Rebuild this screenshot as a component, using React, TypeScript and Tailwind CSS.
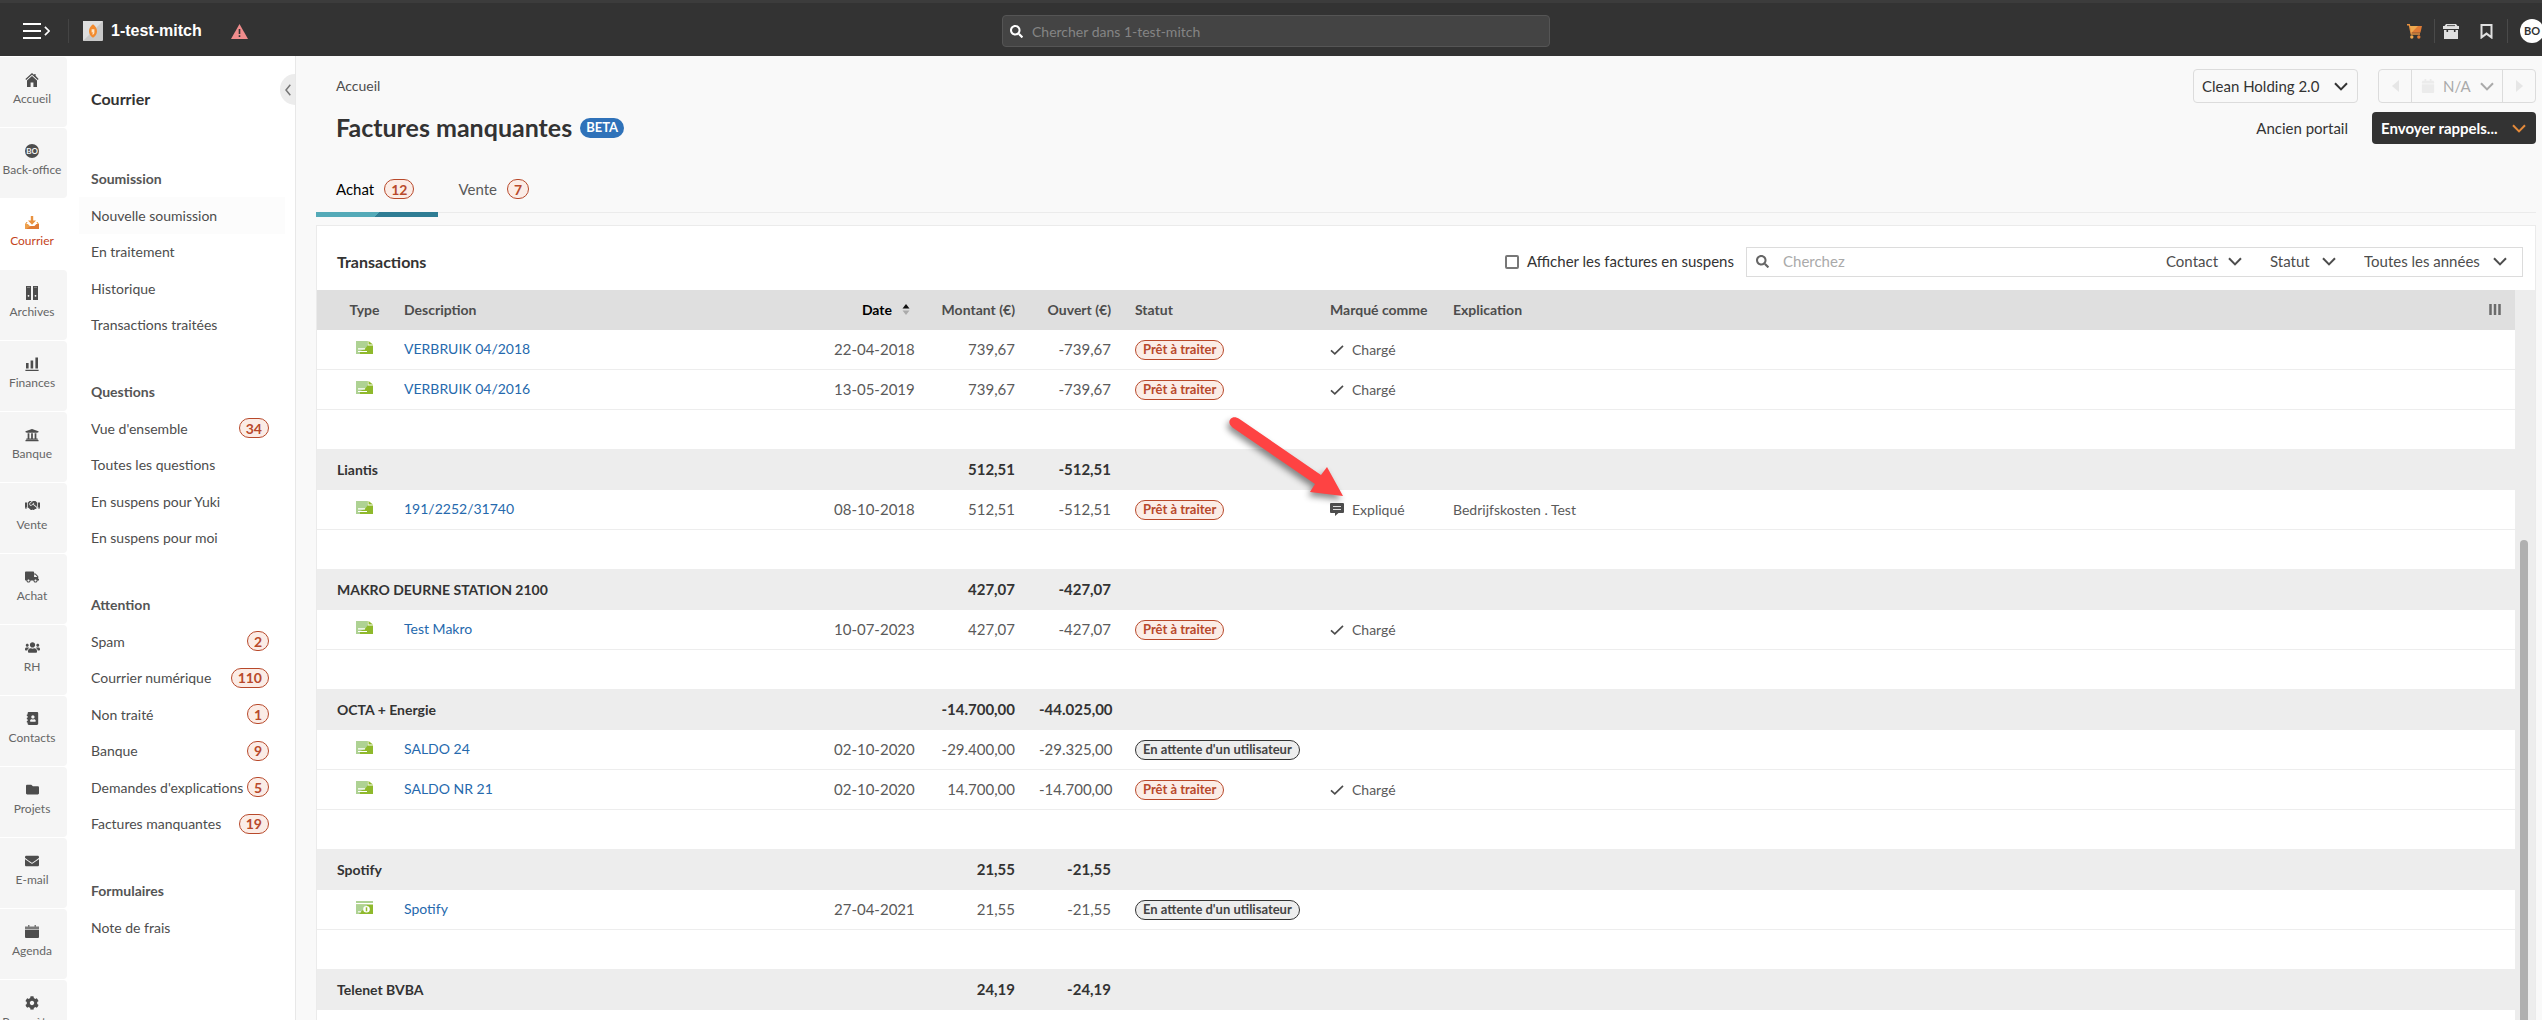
import { useState } from "react";
import type { ReactNode } from "react";
import { clsx } from "clsx";
import { FaAddressBook, FaCalendar, FaCog, FaEnvelope, FaFolder, FaHandshake, FaSearch, FaTruck, FaUniversity, FaUsers } from "react-icons/fa";

interface ChevronProps {
    className?: string;
}

const Chevron = ({ className }: ChevronProps) => (
    <svg viewBox="0 0 14 9" fill="none" stroke="currentColor" strokeWidth="2" className={clsx("h-[9px] w-[14px]", className)}>
        <path d="M1 1.2 7 7.4 13 1.2" />
    </svg>
);

const HomeIcon = () => (
    <svg viewBox="0 0 14 14" fill="currentColor" className="size-[14px]">
        <path d="M10.6 1v1.7L13.6 6l-.8.9L7 1.7 1.2 6.9.4 6 7 0l2.2 2V1z" />
        <path d="M7 3 2 7.5V14h3.6V9.4h2.8V14H12V7.5z" />
    </svg>
);

const BackOfficeIcon = () => (
    <span className="flex size-[14px] items-center justify-center rounded-full bg-[#4d4d4d] text-[8px] font-bold text-[#f5f5f5]">BO</span>
);

const InboxIcon = () => (
    <svg viewBox="0 0 14 14" className="size-[14px]">
        <path d="M0 9h2.600L4.600 11h4.800L11.400 9H14v5H0z" fill="#e07b35" />
        <path d="M0 9h2.600L4.600 11H6L1 14H0z" fill="#eda04c" />
        <path d="M5.800 1h2.400v4.600H11L7 9.800 3 5.600h2.800z" fill="#e9923f" />
        <path d="M1.400 7h1.200L1.400 9H0zM12.600 7h-1.200l1.200 2H14z" fill="#eda04c" />
    </svg>
);

const ArchiveIcon = () => (
    <svg viewBox="0 0 14 14" className="size-[14px]">
        <path d="M1 0h5v14H1zM8 0h5v14H8z" fill="#4d4d4d" />
        <path d="M2 1.4h3M9 1.4h3" stroke="#8a8a8a" />
        <circle cx="3.5" cy="9.8" r=".9" fill="#fff" />
        <circle cx="10.5" cy="9.8" r=".9" fill="#fff" />
    </svg>
);

const BarsIcon = () => (
    <svg viewBox="0 0 14 14" fill="currentColor" className="size-[14px]">
        <path d="M1 6h2.6v5.6H1zM5.6 3.6h2.6v8H5.6zM10.4.6H13v11h-2.6zM.4 12.8h13.2V14H.4z" />
    </svg>
);

const AgendaIcon = () => (
    <svg viewBox="0 0 14 13" className="h-[13px] w-[14px]">
        <path d="M0 1.500h3V0h1.500v1.500h5V0H11v1.500h3v3H0z" fill="#7a7a7a" />
        <path d="M0 5h14v7a1 1 0 0 1-1 1H1a1 1 0 0 1-1-1z" fill="#4d4d4d" />
    </svg>
);

const rail: { label: string; icon: ReactNode; active?: boolean }[] = [
    { label: "Accueil", icon: <HomeIcon /> },
    { label: "Back-office", icon: <BackOfficeIcon /> },
    { label: "Courrier", icon: <InboxIcon />, active: true },
    { label: "Archives", icon: <ArchiveIcon /> },
    { label: "Finances", icon: <BarsIcon /> },
    { label: "Banque", icon: <FaUniversity size={14} /> },
    { label: "Vente", icon: <FaHandshake size={15} /> },
    { label: "Achat", icon: <FaTruck size={14} /> },
    { label: "RH", icon: <FaUsers size={15} /> },
    { label: "Contacts", icon: <FaAddressBook size={13} className="-scale-x-100" /> },
    { label: "Projets", icon: <FaFolder size={13} /> },
    { label: "E-mail", icon: <FaEnvelope size={14} /> },
    { label: "Agenda", icon: <AgendaIcon /> },
    { label: "Paramètres", icon: <FaCog size={14} /> },
];

interface MenuGroup {
    title: string;
    listHeight: string;
    items: { label: string; count?: number; hover?: boolean }[];
}

const menu: MenuGroup[] = [
    {
        title: "Soumission",
        listHeight: "h-[146px]",
        items: [
            { label: "Nouvelle soumission", hover: true },
            { label: "En traitement" },
            { label: "Historique" },
            { label: "Transactions traitées" },
        ],
    },
    {
        title: "Questions",
        listHeight: "h-[146px]",
        items: [
            { label: "Vue d'ensemble", count: 34 },
            { label: "Toutes les questions" },
            { label: "En suspens pour Yuki" },
            { label: "En suspens pour moi" },
        ],
    },
    {
        title: "Attention",
        listHeight: "h-[219px]",
        items: [
            { label: "Spam", count: 2 },
            { label: "Courrier numérique", count: 110 },
            { label: "Non traité", count: 1 },
            { label: "Banque", count: 9 },
            { label: "Demandes d'explications", count: 5 },
            { label: "Factures manquantes", count: 19 },
        ],
    },
    {
        title: "Formulaires",
        listHeight: "h-9",
        items: [{ label: "Note de frais" }],
    },
];

interface Transaction {
    type: "invoice" | "receipt";
    description: string;
    date: string;
    amount: string;
    open: string;
    status: "ready" | "waiting";
    marked?: "Chargé" | "Expliqué";
    explanation?: string;
}

interface Supplier {
    name?: string;
    amount?: string;
    open?: string;
    rows: Transaction[];
}

const suppliers: Supplier[] = [
    {
        rows: [
            { type: "invoice", description: "VERBRUIK 04/2018", date: "22-04-2018", amount: "739,67", open: "-739,67", status: "ready", marked: "Chargé" },
            { type: "invoice", description: "VERBRUIK 04/2016", date: "13-05-2019", amount: "739,67", open: "-739,67", status: "ready", marked: "Chargé" },
        ],
    },
    {
        name: "Liantis",
        amount: "512,51",
        open: "-512,51",
        rows: [
            { type: "invoice", description: "191/2252/31740", date: "08-10-2018", amount: "512,51", open: "-512,51", status: "ready", marked: "Expliqué", explanation: "Bedrijfskosten . Test" },
        ],
    },
    {
        name: "MAKRO DEURNE STATION 2100",
        amount: "427,07",
        open: "-427,07",
        rows: [
            { type: "invoice", description: "Test Makro", date: "10-07-2023", amount: "427,07", open: "-427,07", status: "ready", marked: "Chargé" },
        ],
    },
    {
        name: "OCTA + Energie",
        amount: "-14.700,00",
        open: "-44.025,00",
        rows: [
            { type: "invoice", description: "SALDO 24", date: "02-10-2020", amount: "-29.400,00", open: "-29.325,00", status: "waiting" },
            { type: "invoice", description: "SALDO NR 21", date: "02-10-2020", amount: "14.700,00", open: "-14.700,00", status: "ready", marked: "Chargé" },
        ],
    },
    {
        name: "Spotify",
        amount: "21,55",
        open: "-21,55",
        rows: [
            { type: "receipt", description: "Spotify", date: "27-04-2021", amount: "21,55", open: "-21,55", status: "waiting" },
        ],
    },
    { name: "Telenet BVBA", amount: "24,19", open: "-24,19", rows: [] },
];

export default function App() {
    return (
        <div className="flex h-screen flex-col overflow-hidden bg-[#f9f9f9] font-['Lato',sans-serif] text-[14px] text-[#4d4d4d]">
            <TopBar />
            <div className="flex min-h-0 flex-1">
                <Rail />
                <SideMenu />
                <main className="flex min-w-0 flex-1 flex-col pr-[6px] pl-5">
                    <PageHeader />
                    <Transactions />
                </main>
            </div>
        </div>
    );
}

const TopBar = () => (
    <header className="flex h-14 shrink-0 items-center border-t-[3px] border-[#3c3c3c] bg-[#333] pt-[3px]">
        <div className="flex-1">
            <div className="flex items-center pl-[23px]">
                <button aria-label="Menu" className="flex items-center gap-[3px] text-white">
                    <svg viewBox="0 0 18 16" stroke="currentColor" strokeWidth="2" className="h-4 w-[18px]">
                        <path d="M0 1h18M0 8h18M0 15h18" />
                    </svg>
                    <svg viewBox="0 0 7 12" fill="none" stroke="currentColor" strokeWidth="2" className="h-[10px] w-[6px]">
                        <path d="m1 1 5 5-5 5" />
                    </svg>
                </button>
                <span className="ml-[18px] h-6 w-px bg-[#444]" />
                <a href="#" className="ml-[14px] flex items-center gap-2 font-['Liberation_Sans',sans-serif] text-[16px] font-bold text-white">
                    <svg viewBox="0 0 20 20" className="size-5">
                        <rect width="20" height="20" rx="1" fill="#c9c9c9" />
                        <path d="M0 0h20L0 20z" fill="#dedede" />
                        <path d="M10 3.2c2.6 2 4 4.300 4 7s-1.600 5-4 6.600c-2.400-1.600-4-3.900-4-6.600s1.400-5 4-7z" fill="#f28a2e" />
                        <path d="M8.600 8.200h2.800v3.300c0 1.200-.8 2-2 2.200v-1.300c.6-.2.8-.5.8-1H8.600z" fill="#fde6c8" />
                    </svg>
                    1-test-mitch
                </a>
                <svg viewBox="0 0 17 15" className="ml-[29px] h-[15px] w-[17px]">
                    <path d="M8.500 0 17 15H0z" fill="#f08c8c" />
                    <path d="M8.500 5v5M8.500 11.300v1.800" stroke="#333" strokeWidth="1.600" />
                </svg>
            </div>
        </div>

        {/* global search */}
        <div className="ml-2 flex h-8 w-[548px] items-center gap-[9px] rounded-sm border border-[#555] bg-[#444] px-[7px]">
            <FaSearch size={13} className="text-white" />
            <input aria-label="Chercher" placeholder="Chercher dans 1-test-mitch" className="min-w-0 flex-1 bg-transparent text-[14px] outline-none placeholder:text-[#858585]" />
        </div>

        <div className="-mr-[2px] flex flex-1 items-center justify-end">
            <button aria-label="Boutique">
                <svg viewBox="0 0 15 15" className="size-[15px]">
                    <path d="M0 .7h2.300L4.300 10H13" fill="none" stroke="#e8923f" strokeWidth="1.400" />
                    <path d="M2.800 2H15l-1.600 6.800H4.200z" fill="#e07b35" />
                    <path d="M2.800 2H11L4.500 8.800h-.3z" fill="#efa94f" />
                    <circle cx="4.800" cy="13" r="1.700" fill="#efa94f" />
                    <circle cx="11.800" cy="13" r="1.700" fill="#e07b35" />
                </svg>
            </button>
            <span className="mr-2 ml-3 h-6 w-px bg-[#4a4a4a]" />
            <button aria-label="Panier" className="text-[#e0e0e0]">
                <svg viewBox="0 0 16 15" fill="currentColor" className="h-[15px] w-4">
                    <path d="M3 0h10l1.500 2H16v3H0V2h1.500z" />
                    <path d="M1 6h2.500v2h1.600V6h5.800v2h1.600V6H15v9H1z" />
                    <path d="M4 1.600h8" stroke="#333" strokeWidth=".8" />
                </svg>
            </button>
            <button aria-label="Signets" className="ml-[21px] text-[#e0e0e0]">
                <svg viewBox="0 0 13 15" fill="none" stroke="currentColor" strokeWidth="2" className="h-[15px] w-[13px]">
                    <path d="M1.500 1h10v12.400L6.500 9.600l-5 3.800z" />
                </svg>
            </button>
            <span className="mr-3 ml-[14px] h-6 w-px bg-[#4a4a4a]" />
            <button className="flex size-6 items-center justify-center rounded-full bg-white text-[11px] font-bold text-[#333]">BO</button>
        </div>
    </header>
);

const Rail = () => (
    <nav className="flex w-[67px] shrink-0 flex-col gap-px overflow-hidden bg-white pt-px">
        {rail.map(({ label, icon, active }) => (
            <a
                key={label}
                href="#"
                className={clsx(
                    "flex h-[70px] shrink-0 flex-col items-center gap-1 rounded-r-sm pt-[15px] pr-[3px] text-[12px] leading-4",
                    active ? "bg-white text-[#c4441c]" : "bg-[#f5f5f5] text-[#666]"
                )}
            >
                <span className={clsx("flex h-[15px] items-center", !active && "text-[#4d4d4d]")}>{icon}</span>
                {label}
            </a>
        ))}
    </nav>
);

interface CountProps {
    value: number;
}

const Count = ({ value }: CountProps) => (
    <span className="flex h-5 shrink-0 items-center rounded-[10px] border border-[#b8492b] bg-[#fbece6] px-[6px] text-[14px] font-bold text-[#b8492b]">{value}</span>
);

const SideMenu = () => (
    <aside className="relative w-[229px] shrink-0 border-r border-[#e8e8e8] bg-white pt-[31px] pr-[10px] pl-3">
        <h2 className="pl-3 text-[16px] leading-6 font-bold text-[#333]">Courrier</h2>
        <button aria-label="Réduire" className="absolute top-[18px] right-0 flex h-[31px] w-[15px] items-center justify-center rounded-l-full bg-[#ececec] text-[#777]">
            <svg viewBox="0 0 6 12" fill="none" stroke="currentColor" strokeWidth="1.500" className="h-3 w-[6px]">
                <path d="M5.300.7 1 6l4.300 5.300" />
            </svg>
        </button>
        <div className="mt-[50px] flex flex-col gap-[31px]">
            {menu.map(({ title, listHeight, items }) => (
                <section key={title}>
                    <h3 className="h-9 pl-3 leading-9 font-bold text-[#555]">{title}</h3>
                    <ul className={clsx("grid auto-rows-fr", listHeight)}>
                        {items.map(({ label, count, hover }) => (
                            <li key={label} className={clsx("flex", hover && "bg-[#fcfcfc]")}>
                                <a href="#" className="flex flex-1 items-center justify-between pr-4 pl-3 whitespace-nowrap">
                                    {label}
                                    {count && <Count value={count} />}
                                </a>
                            </li>
                        ))}
                    </ul>
                </section>
            ))}
        </div>
    </aside>
);

const PageHeader = () => {
    const [tab, setTab] = useState("Achat");

    return (
        <div className="shrink-0">
            <div className="mt-[13px] flex h-[34px] items-center justify-between pl-5">
                <a href="#" className="pb-[2px] text-[#4d4d4d]">Accueil</a>
                <div className="flex gap-5 text-[15px]">
                    <div className="relative flex h-[34px] items-center rounded-sm border border-[#dcdcdc]">
                        <select aria-label="Administration" className="h-full w-[163px] appearance-none pl-2 text-[#333]">
                            <option>Clean Holding 2.0</option>
                        </select>
                        <Chevron className="pointer-events-none absolute right-[9px] text-[#333]" />
                    </div>
                    <div className="flex h-[34px] w-[158px] items-center rounded-sm border border-[#dcdcdc]">
                        <button disabled aria-label="Précédent" className="flex h-full w-8 items-center justify-center">
                            <svg viewBox="0 0 7 12" fill="#e6e6e6" className="h-3 w-[7px]"><path d="M7 0v12L0 6z" /></svg>
                        </button>
                        <div className="relative flex h-full flex-1 items-center border-x border-[#dcdcdc] text-[#aaa]">
                            <FaCalendar size={14} className="absolute left-[9px] text-[#ebebeb]" />
                            <select disabled aria-label="Période" className="h-full w-full appearance-none pl-[31px]">
                                <option>N/A</option>
                            </select>
                            <Chevron className="pointer-events-none absolute right-2" />
                        </div>
                        <button disabled aria-label="Suivant" className="flex h-full w-8 items-center justify-center">
                            <svg viewBox="0 0 7 12" fill="#e6e6e6" className="h-3 w-[7px]"><path d="M0 0v12l7-6z" /></svg>
                        </button>
                    </div>
                </div>
            </div>

            <div className="mt-[9px] flex h-8 items-center justify-between pl-5">
                <div className="flex items-center gap-2">
                    <h1 className="pb-[2px] text-[25px] leading-[30px] font-bold text-[#333]">Factures manquantes</h1>
                    <span className="flex h-5 items-center rounded-full bg-[#2f72b9] px-[6px] text-[13px] font-bold text-white">BETA</span>
                </div>
                <div className="flex items-center gap-6 text-[15px]">
                    <a href="#" className="text-[#333]">Ancien portail</a>
                    <button className="flex h-8 w-[164px] items-center justify-between rounded-sm bg-[#333] pr-[10px] pl-[9px] font-bold text-white">
                        Envoyer rappels...
                        <Chevron className="text-[#e58a3a]" />
                    </button>
                </div>
            </div>

            {/* tabs */}
            <div className="mt-6 h-[45px] border-b border-[#ebebeb]">
                <div role="tablist" className="flex">
                    {[["Achat", 12], ["Vente", 7]].map(([label, count]) => (
                        <button
                            key={label}
                            role="tab"
                            aria-selected={tab === label}
                            onClick={() => setTab(label as string)}
                            className={clsx("relative flex h-11 items-center gap-[10px] pr-6 pb-[2px] pl-5 text-[15px]", tab === label ? "text-black" : "text-[#5a5a5a]")}
                        >
                            {label}
                            <Count value={count as number} />
                            {tab === label && (
                                <span className="absolute top-11 left-0 h-[5px] w-full bg-[linear-gradient(140deg,#54aab8_50%,#2f7d94_50%)]" />
                            )}
                        </button>
                    ))}
                </div>
            </div>
        </div>
    );
};

interface FilterProps {
    label: string;
    width: string;
}

const Filter = ({ label, width }: FilterProps) => (
    <div className={clsx("relative flex items-center", width)}>
        <select aria-label={label} className="h-full w-full appearance-none">
            <option>{label}</option>
        </select>
        <Chevron className="pointer-events-none absolute right-0" />
    </div>
);

const Transactions = () => (
    <section className="mt-3 flex min-h-0 flex-1 flex-col border border-b-0 border-[#ebebeb] bg-white">
        <div className="flex h-16 shrink-0 items-center justify-between pt-[7px] pr-3 pl-5">
            <h2 className="text-[16px] font-bold text-[#333]">Transactions</h2>
            <div className="flex items-center gap-3 text-[15px]">
                <label className="flex items-center gap-2 text-[#333]">
                    <input type="checkbox" className="size-[14px] appearance-none rounded-xs border-2 border-[#777] checked:bg-[#2f72b9]" />
                    Afficher les factures en suspens
                </label>
                <div className="flex h-[30px] w-[777px] items-center border border-[#dcdcdc] pr-[15px] pl-[9px]">
                    <FaSearch size={13} className="mr-[14px] text-[#666]" />
                    <input aria-label="Cherchez" placeholder="Cherchez" className="min-w-0 flex-1 outline-none placeholder:text-[#aaa]" />
                    <div className="flex h-full gap-7">
                        <Filter label="Contact" width="w-[76px]" />
                        <Filter label="Statut" width="w-[66px]" />
                        <Filter label="Toutes les années" width="w-[143px]" />
                    </div>
                </div>
            </div>
        </div>

        <div className="flex min-h-0 flex-1">
            <div className="relative min-w-0 flex-1 overflow-hidden">
                <TransactionTable />
                <Arrow />
            </div>
            {/* scrollbar */}
            <div className="flex w-5 shrink-0 justify-center bg-[#ededed] pt-[250px] pr-[3px]">
                <div className="w-2 rounded-t-full bg-[#b0b0b0]" />
            </div>
        </div>
    </section>
);

const TransactionTable = () => (
    <table className="w-full table-fixed border-separate border-spacing-0 text-left whitespace-nowrap">
        <colgroup>
            <col className="w-[75px]" />
            <col className="w-[430px]" />
            <col className="w-[104px]" />
            <col className="w-[101px]" />
            <col className="w-24" />
            <col className="w-[195px]" />
            <col className="w-[123px]" />
            <col />
            <col className="w-10" />
        </colgroup>
        <thead>
            <tr className="h-10 bg-[#dfdfdf] [&>th]:pt-0 [&>th]:pb-[2px]">
                <th className="pl-5 text-center">Type</th>
                <th className="px-3">Description</th>
                <th aria-sort="ascending" className="px-3 text-black">
                    <span className="flex items-center justify-end gap-[9px] pr-[3px]">
                        Date
                        <svg viewBox="0 0 10 12" className="h-3 w-[10px]">
                            <path d="M5 1 8.500 5.500h-7z" fill="#111" />
                            <path d="M5 12 8.500 7.500h-7z" fill="#aaa" />
                        </svg>
                    </span>
                </th>
                <th className="px-3 text-right">Montant (€)</th>
                <th className="px-3 text-right">Ouvert (€)</th>
                <th className="px-3">Statut</th>
                <th className="px-3">Marqué comme</th>
                <th className="px-3">Explication</th>
                <th className="pl-[14px]">
                    <button aria-label="Colonnes" className="block">
                        <svg viewBox="0 0 12 11" className="h-[11px] w-3" stroke="#6b6b6b" strokeWidth="2.500"><path d="M1.500 0v11M6 0v11M10.500 0v11" /></svg>
                    </button>
                </th>
            </tr>
        </thead>
        {suppliers.map((supplier, i) => (
            <tbody key={i}>
                {supplier.name && (
                    <tr className="h-10 bg-[#ededed] font-bold text-[#333] [&>td]:pt-0 [&>td]:pb-[2px]">
                        <td colSpan={3} className="pl-5">{supplier.name}</td>
                        <td className="px-3 text-right text-[15px]">{supplier.amount}</td>
                        <td className="px-3 text-right text-[15px]">{supplier.open}</td>
                        <td colSpan={4} />
                    </tr>
                )}
                {supplier.rows.map((row) => <TransactionRow key={row.description} {...row} />)}
                {supplier.rows.length > 0 && (
                    <tr className="h-10">
                        <td colSpan={9} className="border-b border-[#ededed]" />
                    </tr>
                )}
            </tbody>
        ))}
    </table>
);

const TransactionRow = ({ type, description, date, amount, open, status, marked, explanation }: Transaction) => (
    <tr className="h-10 text-[#5a5a5a] [&>td]:border-b [&>td]:border-[#ededed] [&>td]:py-0">
        <td className="pl-5">
            <span className="flex justify-center pb-1">
                {type === "invoice" ? <InvoiceIcon /> : <ReceiptIcon />}
            </span>
        </td>
        <td className="px-3">
            <a href="#" className="block pb-[3px] text-[#2569ad]">{description}</a>
        </td>
        <td className="px-3 text-right text-[15px]">{date}</td>
        <td className="px-3 text-right text-[15px]">{amount}</td>
        <td className="px-3 text-right text-[15px]">{open}</td>
        <td className="px-3">
            <span
                className={clsx(
                    "flex h-5 w-fit items-center rounded-[10px] border px-[7px] text-[13px] font-bold",
                    status === "ready" ? "border-[#b8492b] bg-[#fbece6] text-[#b8492b]" : "border-[#333] bg-[#ededed] text-[#444]"
                )}
            >
                {status === "ready" ? "Prêt à traiter" : "En attente d'un utilisateur"}
            </span>
        </td>
        <td className="px-3">
            {marked && (
                <span className="flex items-center gap-2">
                    {marked === "Chargé" ? <CheckIcon /> : <CommentIcon />}
                    {marked}
                </span>
            )}
        </td>
        <td className="px-3">{explanation}</td>
        <td />
    </tr>
);

const InvoiceIcon = () => (
    <svg viewBox="0 0 17 13" className="h-[13px] w-[17px]">
        <path d="M0 0h11.500v4.500H17V13H0z" fill="#8fb92c" />
        <path d="M0 0h11.500v4.500L9 8 4 10v3H0z" fill="#aed293" />
        <path d="M12.500 0 17 3.600h-4.500z" fill="#8fb92c" />
        <path d="M2 7.800h7M2 10.500h9" stroke="#fff" strokeWidth="1.200" />
    </svg>
);

const ReceiptIcon = () => (
    <svg viewBox="0 0 17 13" className="h-[13px] w-[17px]">
        <path d="M0 0h17v2H0z" fill="#aed293" />
        <path d="M0 3.500h17V13H0z" fill="#8fb92c" />
        <path d="M0 3.500h12L3 13H0z" fill="#aed293" />
        <circle cx="10.500" cy="8.300" r="3.300" fill="#fff" />
        <path d="M10.500 6.300v4" stroke="#8fb92c" strokeWidth="1.500" />
        <path d="M2 10.800h3" stroke="#fff" />
    </svg>
);

const CheckIcon = () => (
    <svg viewBox="0 0 14 10" fill="none" stroke="#4d4d4d" strokeWidth="1.700" className="h-[10px] w-[14px]">
        <path d="m1 5.400 3.800 3.400L13 .8" />
    </svg>
);

const CommentIcon = () => (
    <svg viewBox="0 0 14 13" className="h-[13px] w-[14px]">
        <path d="M1 0h12a1 1 0 0 1 1 1v8a1 1 0 0 1-1 1H8.500L5 13v-3H1a1 1 0 0 1-1-1V1a1 1 0 0 1 1-1z" fill="#4d4d4d" />
        <path d="M3 3.500h8M3 6.500h8" stroke="#ddd" strokeWidth="1.100" />
    </svg>
);

// pointer laid over the table, towards the "Expliqué" mark
const Arrow = () => (
    <svg viewBox="0 0 130 100" className="pointer-events-none absolute top-[120px] left-[909px] h-[100px] w-[130px] drop-shadow-[-2px_4px_3px_rgba(0,0,0,0.45)]">
        <path d="M13.500 9 95 65l6-8 16 29-33-4 5-8L6.500 17.500C3 14.500 2.500 11.500 4.500 9s5.500-2.500 9 0z" fill="#fe4343" />
    </svg>
);
